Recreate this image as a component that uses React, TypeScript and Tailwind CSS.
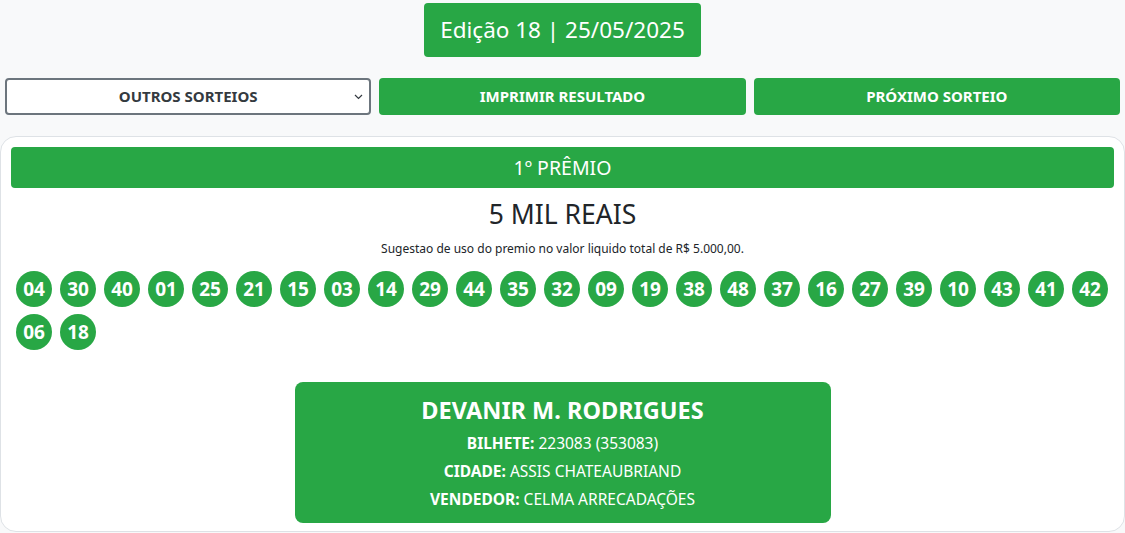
import React from "react";

const nums = ["04","30","40","01","25","21","15","03","14","29","44","35","32","09","19","38","48","37","16","27","39","10","43","41","42","06","18"];

export default function App() {
  return (
    <div className="min-h-[533px] bg-[#f8f9fa] text-[#212529]" style={{ fontFamily: '"Noto Sans", "Open Sans", sans-serif' }}>
      <div className="flex justify-center pt-[3px]">
        <div className="w-[277px] h-[54px] bg-[#28a745] rounded-[4px] text-white text-[22.5px] flex items-center justify-center">
          Edição 18 | 25/05/2025
        </div>
      </div>
      <div className="grid grid-cols-3 gap-2 px-[5px] mt-[21px]">
        <div className="h-[37px] border-2 border-[#6c757d] rounded-[4px] bg-white flex items-center relative">
          <span className="flex-1 text-center text-[15px] font-bold text-[#343a40]">OUTROS SORTEIOS</span>
          <svg className="absolute right-[6px] top-[14px]" width="9" height="6" viewBox="0 0 9 6"><path d="M1 1l3.5 3.5L8 1" fill="none" stroke="#343a40" strokeWidth="1.2" /></svg>
        </div>
        <div className="h-[37px] bg-[#28a745] rounded-[4px] text-white text-[15px] font-bold flex items-center justify-center">IMPRIMIR RESULTADO</div>
        <div className="h-[37px] bg-[#28a745] rounded-[4px] text-white text-[15px] font-bold flex items-center justify-center">PRÓXIMO SORTEIO</div>
      </div>
      <div className="mt-[21px] bg-white border border-[#dee2e6] rounded-[16px] px-[10px] pt-[10px] pb-[8px]">
        <div className="h-[41px] bg-[#28a745] rounded-[4px] text-white text-[19.5px] flex items-center justify-center">1º PRÊMIO</div>
        <div className="text-center text-[26.5px] mt-[9px] leading-[34px]">5 MIL REAIS</div>
        <div className="text-center text-[12px] mt-[10px] leading-[16px]">Sugestao de uso do premio no valor liquido total de R$ 5.000,00.</div>
        <div className="flex flex-wrap gap-x-2 gap-y-[7px] pl-[5px] mt-[14px]">
          {nums.map((n, i) => (
            <div key={i} className="w-[36px] h-[36px] rounded-full bg-[#28a745] text-white font-bold text-[19px] flex items-center justify-center">{n}</div>
          ))}
        </div>
        <div className="flex justify-center mt-[32px]">
          <div className="w-[536px] bg-[#28a745] rounded-[8px] text-white text-center pt-[12px] pb-[10px]">
            <div className="text-[23.5px] font-bold leading-[32px]">DEVANIR M. RODRIGUES</div>
            <div className="text-[15.5px] leading-[28px] mt-[3px]"><b>BILHETE:</b> 223083 (353083)</div>
            <div className="text-[15.5px] leading-[28px]"><b>CIDADE:</b> ASSIS CHATEAUBRIAND</div>
            <div className="text-[15.5px] leading-[28px]"><b>VENDEDOR:</b> CELMA ARRECADAÇÕES</div>
          </div>
        </div>
      </div>
    </div>
  );
}
